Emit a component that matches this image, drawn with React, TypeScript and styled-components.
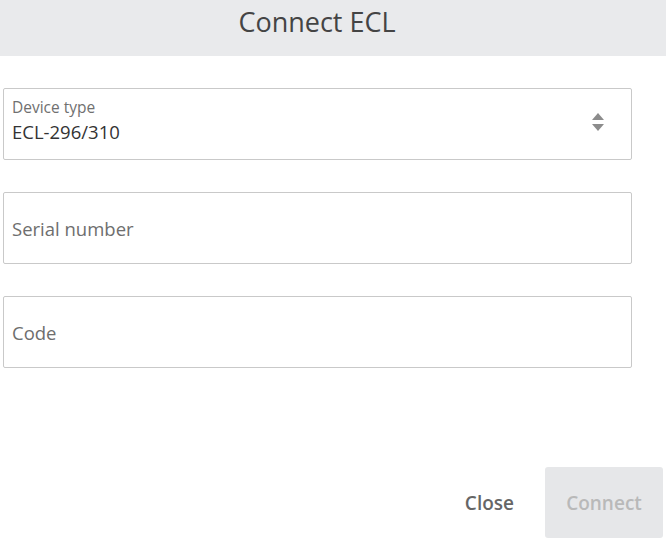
import styled, {createGlobalStyle} from 'styled-components';

const GlobalStyle = createGlobalStyle`
  html, body {
    margin: 0;
    padding: 0;
    background: #ffffff;
    font-family: "Open Sans", "Noto Sans", sans-serif;
  }
`;

function SortArrows() {
    return (
        <svg width="14" height="22" viewBox="0 0 14 22">
            <path d="M7 2 L13 9 L1 9 Z" fill="#8c8c8c"/>
            <path d="M1 13 L13 13 L7 20 Z" fill="#8c8c8c"/>
        </svg>
    );
}

function App() {
    return (
        <>
            <GlobalStyle/>
            <Dialog>
                <Header>Connect ECL</Header>
                <Form>
                    <Field>
                        <FieldText>
                            <Label>Device type</Label>
                            <Value>ECL-296/310</Value>
                        </FieldText>
                        <Arrows><SortArrows/></Arrows>
                    </Field>
                    <Field>
                        <Placeholder>Serial number</Placeholder>
                    </Field>
                    <Field>
                        <Placeholder>Code</Placeholder>
                    </Field>
                </Form>
                <Footer>
                    <TextButton>Close</TextButton>
                    <PrimaryButton disabled>Connect</PrimaryButton>
                </Footer>
            </Dialog>
        </>
    );
}

export default App;


const Dialog = styled.div`
  height: 542px;
  display: flex;
  flex-direction: column;
`;

const Header = styled.div`
  height: 56px;
  background: #e9eaec;
  color: #444;
  font-size: 27px;
  line-height: 44px;
  text-align: center;
  padding-right: 32px;
  box-sizing: border-box;
`;

const Form = styled.div`
  display: flex;
  flex-direction: column;
  gap: 32px;
  padding: 32px 34px 0 3px;
`;

const Field = styled.div`
  height: 72px;
  box-sizing: border-box;
  border: 1px solid #c9c9c9;
  border-radius: 2px;
  display: flex;
  align-items: center;
  padding: 0 26px 0 8px;
`;

const FieldText = styled.div`
  flex: 1;
  display: flex;
  flex-direction: column;
  padding-bottom: 6px;
`;

const Label = styled.span`
  font-size: 15.5px;
  color: #707070;
  line-height: 22px;
`;

const Value = styled.span`
  font-size: 18.5px;
  color: #333;
  line-height: 28px;
`;

const Placeholder = styled.span`
  font-size: 18.5px;
  color: #6e6e6e;
`;

const Arrows = styled.div`
  display: flex;
  align-items: center;
  padding-bottom: 4px;
`;

const Footer = styled.div`
  margin-top: auto;
  display: flex;
  justify-content: flex-end;
  align-items: center;
  gap: 31px;
  padding: 0 3px 4px 0;
`;

const TextButton = styled.button`
  background: none;
  border: none;
  font-family: inherit;
  font-size: 19px;
  font-weight: 600;
  color: #666;
  cursor: pointer;
  padding: 0;
`;

const PrimaryButton = styled.button`
  width: 118px;
  height: 71px;
  border: none;
  border-radius: 3px;
  background: #e6e7e9;
  color: #b9b9b9;
  font-family: inherit;
  font-size: 19px;
  font-weight: 600;
`;
